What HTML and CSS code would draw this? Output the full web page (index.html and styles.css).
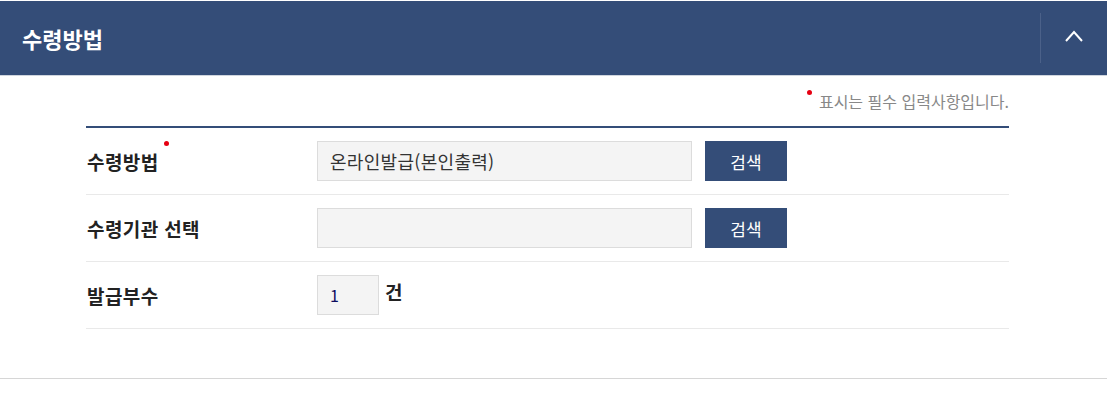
FILE: index.html
```html
<!DOCTYPE html>
<html lang="ko">
<head>
<meta charset="utf-8">
<link rel="stylesheet" href="styles.css">
</head>
<body>
<div class="panel">
  <div class="panel-head">
    <h2 class="panel-title">수령방법</h2>
    <button class="toggle" type="button" aria-label="접기">
      <svg width="18" height="12" viewBox="0 0 18 12"><polyline points="1,11 9,2 17,11" fill="none" stroke="#fff" stroke-width="2"/></svg>
    </button>
  </div>
  <div class="panel-body">
    <p class="req-note"><span class="dot"></span>표시는 필수 입력사항입니다.</p>
    <div class="form-table">
      <div class="row">
        <div class="label">수령방법<span class="dot dot-label"></span></div>
        <div class="value">
          <div class="field wide">온라인발급(본인출력)</div>
          <button class="btn" type="button">검색</button>
        </div>
      </div>
      <div class="row">
        <div class="label">수령기관 선택</div>
        <div class="value">
          <div class="field wide"></div>
          <button class="btn" type="button">검색</button>
        </div>
      </div>
      <div class="row">
        <div class="label">발급부수</div>
        <div class="value">
          <div class="field num">1</div>
          <span class="unit">건</span>
        </div>
      </div>
    </div>
  </div>
</div>
</body>
</html>
```
FILE: styles.css
```css
* { box-sizing: border-box; }
html, body { margin: 0; padding: 0; background: #fff; }
body {
  font-family: "Noto Sans CJK KR", "Noto Sans", sans-serif;
  color: #222;
}
.panel {
  padding-top: 1px;
  border-bottom: 1px solid #d6d6d6;
  height: 379px;
}
.panel-head {
  height: 75px;
  background: #344d78;
  border-bottom: 1px solid #cfd5de;
  display: flex;
  align-items: center;
  justify-content: space-between;
}
.panel-title {
  margin: 0 0 0 22px;
  font-size: 22px;
  font-weight: 700;
  color: #fff;
  line-height: 1;
}
.toggle {
  width: 67px;
  height: 50px;
  margin: 0;
  padding: 0 0 4px;
  border: 0;
  border-left: 1px solid #4b6189;
  background: transparent;
  display: flex;
  align-items: center;
  justify-content: center;
}
.panel-body {
  margin-left: 86px;
  width: 923px;
}
.req-note {
  margin: 14px 0 0;
  height: 36px;
  text-align: right;
  font-size: 16px;
  color: #888;
  line-height: 22px;
}
.dot {
  display: inline-block;
  width: 5px;
  height: 5px;
  border-radius: 50%;
  background: #e60012;
  vertical-align: top;
  margin-right: 7px;
}
.form-table {
  border-top: 2px solid #344d78;
}
.row {
  display: flex;
  align-items: center;
  padding: 13px 0;
  border-bottom: 1px solid #e9e9e9;
}
.label {
  width: 231px;
  padding-left: 1px;
  font-size: 19px;
  font-weight: 700;
  letter-spacing: 0.4px;
  color: #222;
  position: relative;
}
.dot-label {
  position: absolute;
  left: 78px;
  top: -7px;
}
.value {
  display: flex;
  align-items: center;
  gap: 13px;
}
.field {
  height: 40px;
  background: #f4f4f4;
  border: 1px solid #dcdcdc;
  font-size: 18px;
  letter-spacing: 0.3px;
  color: #333;
  line-height: 38px;
  padding-left: 12px;
}
.wide { width: 375px; }
.num { width: 62px; font-size: 16px; color: #0c0c5e; }
.btn {
  width: 82px;
  height: 40px;
  background: #344d78;
  color: #fff;
  border: 0;
  font-family: inherit;
  font-size: 17px;
  padding: 0;
}
.value .unit {
  font-size: 19px;
  font-weight: 700;
  margin-left: -7px;
  align-self: flex-start;
  margin-top: 3px;
}
```
